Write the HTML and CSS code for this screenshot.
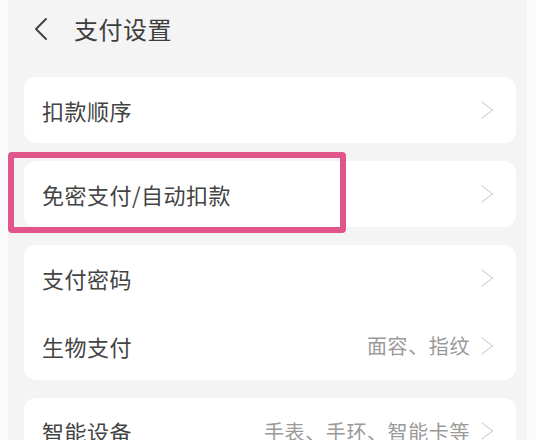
FILE: index.html
```html
<!DOCTYPE html>
<html lang="zh-CN">
<head>
    <meta charset="UTF-8">
    <title>支付设置</title>
    <meta name="viewport" content="width=device-width, initial-scale=1.0">
    <link rel="stylesheet" href="styles.css">
</head>
<body>
    <div class="screen">
        <div class="topbar">
            <svg class="back" width="14" height="24" viewBox="0 0 14 24">
                <path d="M12 2 L2 12 L12 22" fill="none" stroke="#444" stroke-width="2" stroke-linecap="round" stroke-linejoin="round"/>
            </svg>
            <span class="title">支付设置</span>
        </div>

        <div class="card">
            <div class="row">
                <span class="label">扣款顺序</span>
                <span class="arrow"></span>
            </div>
        </div>

        <div class="card">
            <div class="row">
                <span class="label">免密支付/自动扣款</span>
                <span class="arrow"></span>
            </div>
        </div>

        <div class="card">
            <div class="row">
                <span class="label">支付密码</span>
                <span class="arrow"></span>
            </div>
            <div class="row">
                <span class="label">生物支付</span>
                <span class="value">面容、指纹</span>
                <span class="arrow"></span>
            </div>
        </div>

        <div class="card">
            <div class="row">
                <span class="label">智能设备</span>
                <span class="value">手表、手环、智能卡等</span>
                <span class="arrow"></span>
            </div>
        </div>

        <div class="highlight"></div>
    </div>
</body>
</html>
```

FILE: styles.css
```css
body {
    margin: 0;
    background: #fafafa;
    font-family: "Noto Sans CJK SC", "Noto Sans", sans-serif;
    color: #444;
    overflow: hidden;
}
.screen {
    position: relative;
    margin: 0 9px 0 8px;
    height: 440px;
    background: #f4f4f4;
    padding: 0 11px 0 16px;
    display: flex;
    flex-direction: column;
    gap: 18px;
}
.screen > * {
    flex-shrink: 0;
}
.topbar {
    height: 57px;
    display: flex;
    align-items: center;
    gap: 26px;
    padding-left: 10px;
    margin-bottom: 2px;
}
.back {
    display: block;
}
.title {
    font-size: 24px;
    color: #3d3d3d;
    letter-spacing: 0.5px;
}
.card {
    background: #fff;
    border-radius: 12px;
    display: flex;
    flex-direction: column;
}
.row {
    height: 66px;
    flex-shrink: 0;
    display: flex;
    align-items: center;
    padding: 0 22px 0 18px;
}
.card .row + .row {
    height: 69px;
}
.label {
    font-size: 22px;
    flex: 1;
    letter-spacing: 0.5px;
}
.value {
    font-size: 20px;
    color: #9a9a9a;
    margin-right: 10px;
    letter-spacing: 0.6px;
}
.arrow {
    width: 14px;
    height: 22px;
    position: relative;
}
.arrow::before {
    content: "";
    position: absolute;
    left: -5px;
    top: 4px;
    width: 13px;
    height: 13px;
    border-top: 1.5px solid #c9c9c9;
    border-right: 1.5px solid #c9c9c9;
    transform: rotate(45deg) skew(-8deg, -8deg);
}
.highlight {
    position: absolute;
    left: 0;
    top: 152px;
    width: 326px;
    height: 69px;
    border: 6px solid #e0558a;
    border-radius: 4px;
}
```
